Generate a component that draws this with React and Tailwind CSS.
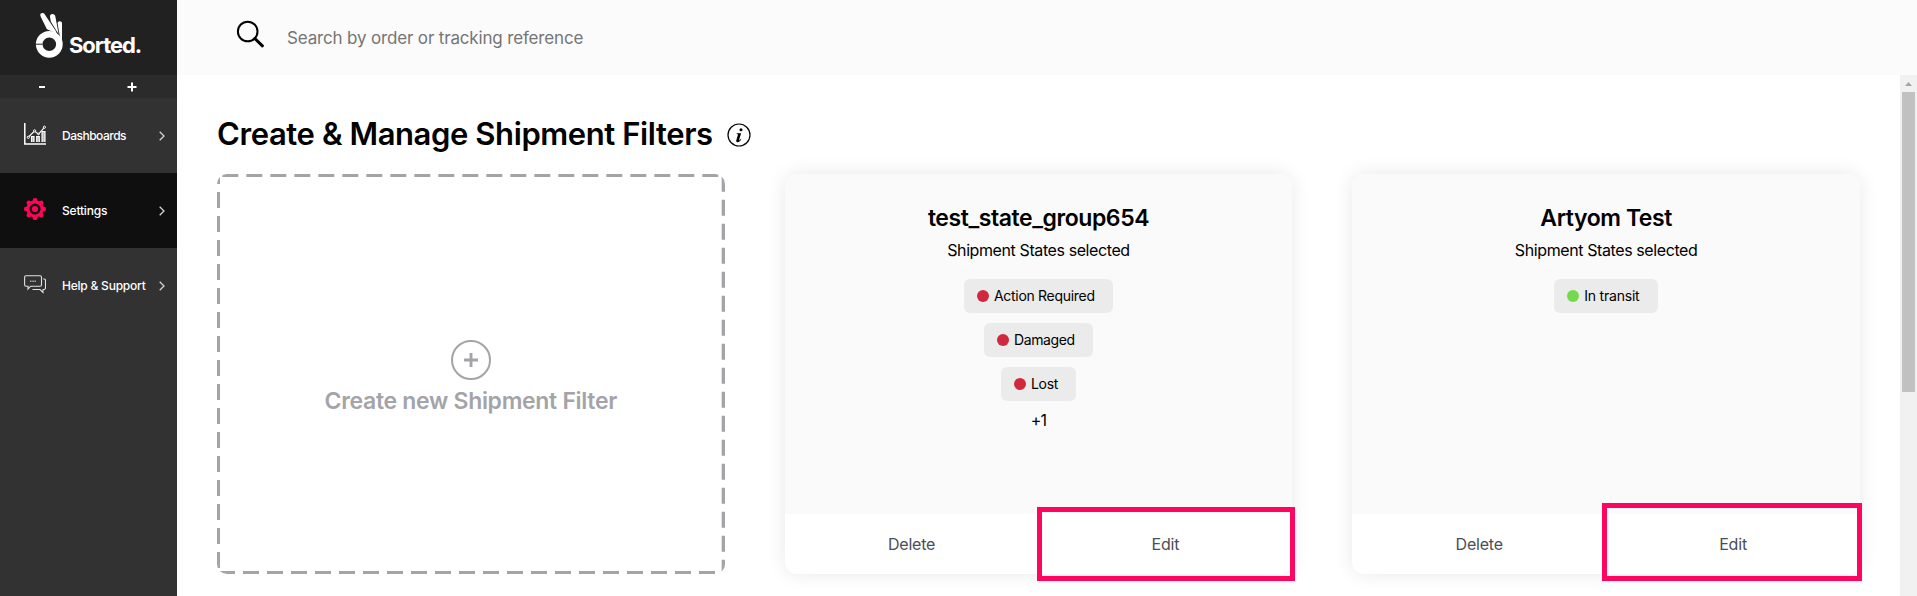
import React from "react";

function Logo() {
  return (
    <div className="flex h-[75px] items-start bg-[#212121] pl-[35px] pt-[12px]">
      <svg width="29" height="47" viewBox="0 0 29 47" className="shrink-0">
        <g fill="#fff">
          <path d="M5.6 4.6C4.6 1.8 6 .9 7.6 1c1.400 0 2 .8 2.700 2.200L20.500 18.500 22.500 23 17.600 19.800C14 18 12.400 18 11.800 17z" />
          <path d="M15 4.800C14.800 2.800 16 2 17.400 2c1.600 0 2.700 1 3 2.800L23.600 22 21.300 18.500 15.800 9.500z" />
          <path d="M22.600 11.500c0-1.600.9-2.300 2.200-2.300s2.200.8 2.200 2.400V29L24.600 23z" />
        </g>
        <circle cx="14.300" cy="32.300" r="10.100" fill="none" stroke="#fff" strokeWidth="6.600" />
        <path d="M1 32.200h6.500" stroke="#212121" strokeWidth="1" />
      </svg>
      <span className="ml-[5px] mt-[19px] text-[22px] font-bold leading-[28px] tracking-[-1.05px] text-white">
        Sorted.
      </span>
    </div>
  );
}

function ChartIcon() {
  return (
    <svg width="22" height="22" viewBox="0 0 22 22" fill="none" stroke="#fff">
      <path d="M.8 0v21.100H22" strokeWidth="1.500" />
      <path d="M7.500 19V13.500h2.500V19M12.700 19v-5.500h2.600V19M18 19V8.500h3V19" fill="#bbb" strokeWidth="1.100" />
      <path d="M4.500 14l6-6 4 3.200 5.500-6.400" strokeWidth="1.100" />
      <circle cx="4.300" cy="14.300" r="1.100" fill="#323232" strokeWidth="1" />
      <circle cx="10.600" cy="7.800" r="1.100" fill="#323232" strokeWidth="1" />
      <circle cx="14.500" cy="11" r=".8" fill="#323232" strokeWidth="1" />
      <circle cx="20.400" cy="4.200" r="1.100" fill="#323232" strokeWidth="1" />
    </svg>
  );
}

function GearIcon() {
  return (
    <svg width="22" height="22" viewBox="-11 -11 22 22">
      <g fill="#ff0558">
        {[0, 45, 90, 135, 180, 225, 270, 315].map((a) => (
          <path key={a} d="M-3-7L-1.700-10.400Q-1.400-11 0-11T1.700-10.400L3-7z" transform={`rotate(${a})`} />
        ))}
      </g>
      <circle r="7" fill="none" stroke="#ff0558" strokeWidth="2.900" />
      <circle r="3.100" fill="#ff0558" />
    </svg>
  );
}

function ChatIcon() {
  return (
    <svg width="22" height="19" viewBox="0 0 22 19" fill="none" stroke="#e2e2e2" strokeWidth="1.100">
      <path d="M2 .8h14a1.500 1.500 0 0 1 1.500 1.500v7.400a1.500 1.500 0 0 1-1.500 1.500H6.600L4 14v-2.800H2A1.500 1.500 0 0 1 .6 9.700V2.300A1.500 1.500 0 0 1 2 .8z" />
      <path d="M19.300 4h.7a1.500 1.500 0 0 1 1.500 1.500V13a1.500 1.500 0 0 1-1.500 1.500h-1v3l-3-3H8.500" />
      <path d="M6 6.200h1.500M8.300 6.200h1.500M10.500 6.200H12" strokeWidth="1.600" stroke="#aaa" />
    </svg>
  );
}

function NavItem({ icon, label, active, tracking }) {
  return (
    <div className={`flex h-[75px] items-center ${active ? "bg-[#0f0f0f]" : ""}`}>
      <span className="ml-6 flex w-[38px] items-center pb-[3px]">{icon}</span>
      <span className={`flex-1 whitespace-nowrap text-[12px] font-medium leading-[16px] text-white ${tracking}`}>{label}</span>
      <svg width="6" height="10" viewBox="0 0 6 10" className="mr-3 shrink-0" fill="none" stroke="#d4d4d4" strokeWidth="1.300">
        <path d="M.7.700L5 5 .7 9.300" />
      </svg>
    </div>
  );
}

function Chip({ color, label, width, tracking }) {
  return (
    <div className={`flex h-[34px] items-center rounded-[6px] bg-[#ebebeb] pl-[13px] ${width}`}>
      <span className={`size-[12px] shrink-0 rounded-full ${color}`} />
      <span className={`ml-[5px] whitespace-nowrap text-[14px] leading-[20px] text-black ${tracking}`}>{label}</span>
    </div>
  );
}

function FilterCard({ title, titleTracking, highlight, children }) {
  return (
    <div className="flex h-[400px] flex-col rounded-[12px] bg-white shadow-[0_0_20px_rgba(0,0,0,0.09)]">
      <div className="flex h-[340px] flex-col items-center rounded-t-[12px] bg-[#fafafa] pt-[28px]">
        <h2 className={`text-[23px] font-semibold leading-[32px] text-black ${titleTracking}`}>{title}</h2>
        <p className="mt-[4px] text-[16px] leading-[24px] tracking-[-0.4px] text-black">Shipment States selected</p>
        <div className="mt-[17px] flex flex-col items-center gap-[10px]">{children}</div>
      </div>
      <div className="grid h-[60px] grid-cols-2 text-[16px] tracking-[-0.2px] text-[#4b4d58]">
        <div className="flex items-center justify-center">Delete</div>
        <div className="relative flex items-center justify-center">
          Edit
          <span className={`absolute border-[5px] border-[#ff0560] ${highlight}`} />
        </div>
      </div>
    </div>
  );
}

export default function App() {
  return (
    <div className="flex h-[596px] w-[1917px] overflow-hidden bg-white font-['Inter',sans-serif]">
      <aside className="w-[177px] shrink-0 bg-[#323232]">
        <Logo />
        <div className="flex h-[23px] items-center justify-between bg-[#2b2b2b] pl-[39px] pr-[40px] text-white">
          <svg width="6" height="10" viewBox="0 0 6 10" stroke="#fff" strokeWidth="2">
            <path d="M0 5h6" />
          </svg>
          <svg width="10" height="10" viewBox="0 0 10 10" stroke="#fff" strokeWidth="2">
            <path d="M.5 5h9M5 .5v9" />
          </svg>
        </div>
        <NavItem icon={<ChartIcon />} label="Dashboards" tracking="tracking-[-0.5px]" />
        <NavItem icon={<GearIcon />} label="Settings" active tracking="tracking-[-0.2px]" />
        <NavItem icon={<ChatIcon />} label="Help & Support" tracking="tracking-[-0.22px]" />
      </aside>

      <div className="flex min-w-0 flex-1 flex-col">
        <header className="flex h-[75px] shrink-0 items-start bg-[#fbfbfb] pl-[59px]">
          <svg width="29" height="28" viewBox="0 0 29 28" className="mt-5" fill="none" stroke="#000">
            <circle cx="11.700" cy="11.500" r="9.800" strokeWidth="2" />
            <path d="M18.800 18.500l7.600 7.300" strokeWidth="3" strokeLinecap="round" />
          </svg>
          <span className="ml-[22px] mt-[25px] text-[17px] leading-[26px] tracking-[-0.16px] text-[#757575]">
            Search by order or tracking reference
          </span>
        </header>

        <div className="flex min-h-0 flex-1">
          <main className="min-w-0 flex-1 px-10">
            <div className="flex h-[99px] items-center pt-[20px]">
              <h1 className="mb-[2px] whitespace-nowrap text-[31px] font-semibold leading-[40px] tracking-[-0.4px] text-black">
                Create &amp; Manage Shipment Filters
              </h1>
              <svg width="24" height="24" viewBox="0 0 24 24" className="ml-[14px]">
                <circle cx="12" cy="12" r="11" fill="none" stroke="#000" strokeWidth="1.200" />
                <circle cx="14" cy="6.700" r="1.500" />
                <path d="M9.800 10.300h4.300l-2 6.700c-.2.800.5.600 1.700-.9l.5.400c-1.600 2.400-2.900 2.800-3.900 2.700-1.100-.1-1.400-.9-1.100-2l1.500-5c.2-.8 0-1.200-1.200-1.200z" />
              </svg>
            </div>

            <div className="grid grid-cols-3 gap-[60px]">
              <div className="relative flex h-[400px] flex-col items-center overflow-hidden rounded-[10px] pt-[165px] text-[#a4a4a8]">
                <svg className="absolute inset-0 size-full" fill="none">
                  <rect width="100%" height="100%" stroke="#a4a4a8" strokeWidth="6" strokeDasharray="16 8" strokeDashoffset="18.670" />
                </svg>
                <svg width="42" height="42" viewBox="0 0 42 42" fill="none" stroke="currentColor">
                  <circle cx="21" cy="21" r="19" strokeWidth="2" />
                  <path d="M14 21h14M21 14v14" strokeWidth="2.900" />
                </svg>
                <span className="mt-[4px] whitespace-nowrap text-[23px] font-semibold leading-[32px] tracking-[-0.31px]">
                  Create new Shipment Filter
                </span>
              </div>

              <FilterCard
                title="test_state_group654"
                titleTracking="tracking-[-0.43px]"
                highlight="-left-[1px] -right-[3px] -top-[7px] -bottom-[7px]"
              >
                <Chip color="bg-[#d0293d]" label="Action Required" width="w-[149px]" tracking="tracking-[-0.3px]" />
                <Chip color="bg-[#d0293d]" label="Damaged" width="w-[109px]" tracking="tracking-[-0.4px]" />
                <Chip color="bg-[#d0293d]" label="Lost" width="w-[75px]" tracking="tracking-[-0.3px]" />
                <span className="-mt-[3px] text-[16px] leading-[24px] tracking-[-0.8px]">+1</span>
              </FilterCard>

              <FilterCard
                title="Artyom Test"
                titleTracking="tracking-[-0.42px]"
                highlight="-left-[4px] -right-[2px] -top-[11px] -bottom-[7px]"
              >
                <Chip color="bg-[#74d94b]" label="In transit" width="w-[104px]" tracking="tracking-[-0.2px]" />
              </FilterCard>
            </div>
          </main>

          <div className="flex w-[17px] shrink-0 flex-col items-center bg-[#f1f1f1]">
            <svg width="17" height="17" viewBox="0 0 17 17">
              <path d="M5 11L8.500 7 12 11z" fill="#a3a3a3" />
            </svg>
            <div className="h-[300px] w-[13px] bg-[#c1c1c1]" />
          </div>
        </div>
      </div>
    </div>
  );
}
